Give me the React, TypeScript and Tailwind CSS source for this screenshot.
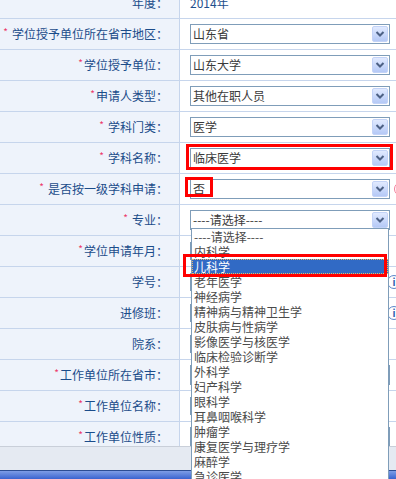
import React from "react"

type Row = {
  label: string
  star: "none" | "gap" | "tight"
  kind: "text" | "select" | "input" | "blank"
  value?: string
  icon?: "info" | "warn"
  inputW?: string
}

const rows: Row[] = [
  { label: "年度", star: "none", kind: "text", value: "2014年" },
  { label: "学位授予单位所在省市地区", star: "gap", kind: "select", value: "山东省" },
  { label: "学位授予单位", star: "tight", kind: "select", value: "山东大学" },
  { label: "申请人类型", star: "tight", kind: "select", value: "其他在职人员" },
  { label: "学科门类", star: "gap", kind: "select", value: "医学" },
  { label: "学科名称", star: "gap", kind: "select", value: "临床医学" },
  { label: "是否按一级学科申请", star: "gap", kind: "select", value: "否", icon: "warn" },
  { label: "专业", star: "gap", kind: "select", value: "----请选择----" },
  { label: "学位申请年月", star: "tight", kind: "input", inputW: "w-[120px]" },
  { label: "学号", star: "none", kind: "input", icon: "info", inputW: "w-[196px]" },
  { label: "进修班", star: "none", kind: "input", icon: "info", inputW: "w-[196px]" },
  { label: "院系", star: "none", kind: "input", inputW: "w-[150px]" },
  { label: "工作单位所在省市", star: "tight", kind: "select", value: "" },
  { label: "工作单位名称", star: "tight", kind: "input", inputW: "w-[196px]" },
  { label: "工作单位性质", star: "tight", kind: "select", value: "" },
]

const options = [
  "----请选择----",
  "内科学",
  "儿科学",
  "老年医学",
  "神经病学",
  "精神病与精神卫生学",
  "皮肤病与性病学",
  "影像医学与核医学",
  "临床检验诊断学",
  "外科学",
  "妇产科学",
  "眼科学",
  "耳鼻咽喉科学",
  "肿瘤学",
  "康复医学与理疗学",
  "麻醉学",
  "急诊医学",
]

function Arrow() {
  return (
    <div className="ml-auto mr-px flex h-[16px] w-[16px] shrink-0 items-center justify-center rounded-[2px] border border-[#c3d3f7] bg-gradient-to-b from-[#e1eaff] to-[#b5c9f6]">
      <svg width="10" height="8" viewBox="0 0 10 8">
        <path d="M1.5 2 L5 5.5 L8.5 2" fill="none" stroke="#4d6185" strokeWidth="2" />
      </svg>
    </div>
  )
}

function Select({ value }: { value: string }) {
  return (
    <div className="flex h-[20px] w-[200px] shrink-0 items-center border border-[#7f9db9] bg-white">
      <span className="pl-[2px] text-[12px] leading-none text-[#3a3a3a]">{value}</span>
      <Arrow />
    </div>
  )
}

function Icon({ kind }: { kind: "info" | "warn" }) {
  if (kind === "warn") {
    return (
      <div className="ml-[4px] flex h-[14px] w-[14px] shrink-0 items-center justify-center rounded-full border border-[#f27a98] text-[10px] font-bold leading-none text-[#e0456e]">
        !
      </div>
    )
  }
  return (
    <div className="ml-[1px] flex h-[14px] w-[14px] shrink-0 items-center justify-center rounded-full border border-[#5a86c9] text-[10px] font-bold leading-none text-[#2f5fae]">
      i
    </div>
  )
}

export default function App() {
  return (
    <div className="relative h-[479px] w-[396px] overflow-hidden bg-white font-['Noto_Sans_CJK_SC','Noto_Sans',sans-serif]">
      <div className="h-[446px] overflow-hidden">
        <div className="-mt-[12px]">
          {rows.map((r) => (
            <div key={r.label} className="flex h-[31px] border-b border-[#c6d5ec]">
              <div className="flex w-[180px] shrink-0 items-center justify-end border-r border-[#c6d5ec] bg-[#eef3fb] pr-[11px] text-[12px] leading-none text-[#1b4c8a]">
                {r.star !== "none" && (
                  <span
                    className={
                      r.star === "gap"
                        ? "mr-[4px] -mt-[4px] text-[10px] text-[#ec3a6c]"
                        : "mr-px -mt-[4px] text-[10px] text-[#ec3a6c]"
                    }
                  >
                    *
                  </span>
                )}
                <span>{r.label}：</span>
              </div>
              <div className="flex flex-1 items-center pl-[10px]">
                {r.kind === "text" && (
                  <span className="text-[12px] leading-none text-[#1e4f8c]">{r.value}</span>
                )}
                {r.kind === "select" && <Select value={r.value ?? ""} />}
                {r.kind === "input" && (
                  <div className={`h-[18px] shrink-0 border border-[#7f9db9] bg-white ${r.inputW}`} />
                )}
                {r.icon && <Icon kind={r.icon} />}
              </div>
            </div>
          ))}
        </div>
      </div>

      {/* bottom bar */}
      <div className="h-[24px] border-t border-[#c9cfd9] bg-[#e5eaf2]" />
      <div className="h-[9px] border-t border-[#2c4d94] bg-gradient-to-b from-[#7f9de6] to-[#3b63cf]" />

      {/* open dropdown list */}
      <div className="absolute left-[191px] top-[228px] w-[198px] border border-[#7f9db9] bg-white">
        {options.map((o, i) => (
          <div
            key={o}
            className={
              i === 2
                ? "h-[15px] bg-[#316ac5] pl-[2px] text-[12px] leading-[15px] text-white outline-1 -outline-offset-1 outline-dotted outline-[#e8b66a]"
                : "h-[15px] pl-[2px] text-[12px] leading-[15px] text-[#4a4a4a]"
            }
          >
            {o}
          </div>
        ))}
      </div>

      {/* red highlight marks */}
      <div className="absolute left-[186px] top-[144px] h-[26px] w-[207px] border-[3px] border-[#ff0000]" />
      <div className="absolute left-[185px] top-[177px] h-[20px] w-[28px] border-[3px] border-[#ff0000]" />
      <div className="absolute left-[183px] top-[254px] h-[23px] w-[204px] border-[3px] border-[#ff0000]" />
    </div>
  )
}
